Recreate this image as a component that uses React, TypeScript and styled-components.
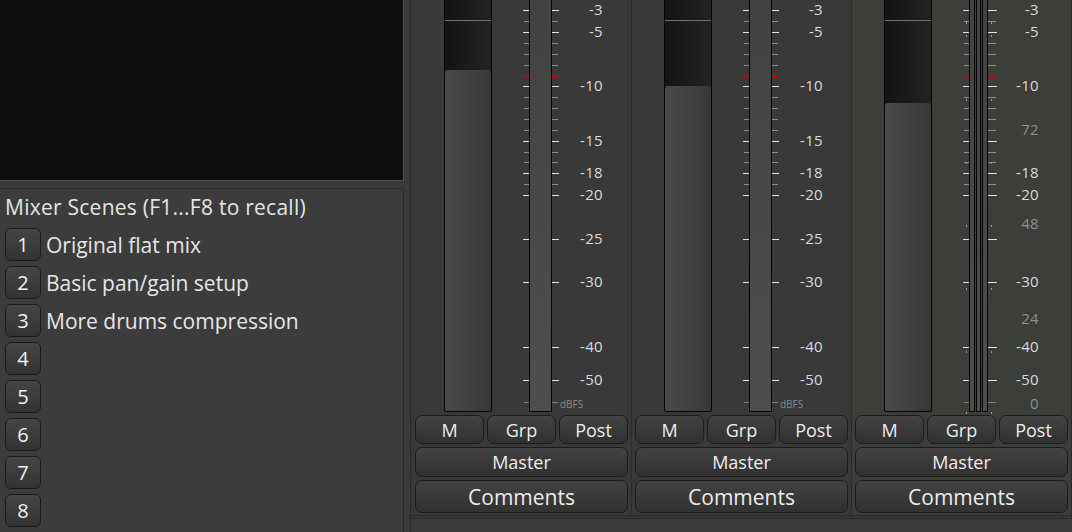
import React from "react";
import styled, { createGlobalStyle } from "styled-components";

const Global = createGlobalStyle`
  html, body { margin: 0; padding: 0; background: #3a3a3a; }
  body { font-family: "Open Sans", "DejaVu Sans", sans-serif; color: #e6e6e6; }
  * { box-sizing: border-box; }
`;

const Window = styled.div`
  display: flex;
  width: 1072px;
  height: 532px;
  overflow: hidden;
  background: #3a3a3a;
`;

/* ---------- left pane ---------- */
const LeftPane = styled.div`
  width: 404px;
  flex-shrink: 0;
  display: flex;
  flex-direction: column;
  gap: 7px;
`;

const Display = styled.div`
  height: 181px;
  flex-shrink: 0;
  background: #0e0e0e;
  border-right: 1px solid #4e4e4e;
  border-bottom: 1px solid #4e4e4e;
`;

const ScenesFrame = styled.div`
  flex: 1;
  background: #3c3c3c;
  border-top: 1px solid #2a2a2a;
  border-right: 1px solid #2a2a2a;
  padding-left: 5px;
`;

const ScenesTitle = styled.div`
  height: 36px;
  line-height: 36px;
  font-size: 21px;
  letter-spacing: 0.25px;
  white-space: nowrap;
  color: #e4e4e4;
`;

const SceneList = styled.div`
  margin-top: 3px;
  display: flex;
  flex-direction: column;
  gap: 5px;
`;

const SceneRow = styled.div`
  display: flex;
  align-items: center;
  gap: 5px;
  height: 33px;
`;

const SceneKey = styled.div`
  width: 36px;
  height: 33px;
  flex-shrink: 0;
  border: 1px solid #1b1b1b;
  border-radius: 6px;
  background: linear-gradient(#454545, #333333);
  display: flex;
  align-items: center;
  justify-content: center;
  font-size: 20px;
  color: #f0f0f0;
`;

const SceneName = styled.div`
  font-size: 21px;
  white-space: nowrap;
  color: #e6e6e6;
`;

/* ---------- divider ---------- */
const Divider = styled.div`
  width: 6px;
  flex-shrink: 0;
  background: #3a3a3a;
`;

/* ---------- mixer ---------- */
const MixerPane = styled.div`
  flex: 1;
  display: flex;
  flex-direction: column;
  border-left: 1px solid #2a2a2a;
  padding-left: 1px;
  background: #363636;
`;

const StripRow = styled.div`
  display: flex;
  height: 516px;
  flex-shrink: 0;
  border-bottom: 1px solid #2a2a2a;
`;

const BottomBar = styled.div`
  flex: 1;
  margin-top: 2px;
  border-top: 1px solid #2b2b2b;
  background: #3b3b3b;
`;

const Strip = styled.div<{ $tint?: boolean }>`
  width: 220px;
  flex-shrink: 0;
  display: flex;
  flex-direction: column;
  background: ${(p) => (p.$tint ? "#3b3e39" : "#393939")};
  border-right: 1px solid #2c2c2c;
`;

const MeterArea = styled.div`
  height: 412px;
  flex-shrink: 0;
  display: flex;
  padding-left: 32px;
`;

const FaderTrough = styled.div`
  position: relative;
  width: 48px;
  height: 412px;
  border: 1px solid #050505;
  border-top: none;
  border-radius: 0 0 3px 3px;
  background: linear-gradient(90deg, #131313, #232323);
  display: flex;
  flex-direction: column;
  justify-content: flex-end;
  margin-right: 31px;
`;

const UnityLine = styled.div`
  position: absolute;
  left: 0;
  right: 0;
  top: 20px;
  height: 1px;
  background: #707070;
`;

const FaderFill = styled.div`
  border-radius: 3px 3px 2px 2px;
  background: linear-gradient(90deg, #4a4a4a, #383838);
`;

const TickColumn = styled.div<{ $w: number }>`
  position: relative;
  width: ${(p) => p.$w}px;
  height: 412px;
`;

const Tick = styled.div<{ $kind: "major" | "minor" | "red" | "end"; $side: "l" | "r" }>`
  position: absolute;
  height: 1px;
  ${(p) => (p.$side === "l" ? "right: 0;" : "left: 0;")}
  width: ${(p) => (p.$kind === "major" ? "100%" : "calc(100% - 1px)")};
  background: ${(p) =>
    p.$kind === "major" ? "#e2e2e2" : p.$kind === "red" ? "#e00000" : p.$kind === "end" ? "#7a7a7a" : "#8c8c8c"};
`;

const Dot = styled.div<{ $side: "l" | "r" }>`
  position: absolute;
  width: 1px;
  height: 2px;
  background: #9a9a9a;
  ${(p) => (p.$side === "l" ? "right: 2px;" : "left: 3px;")}
`;

const Meter = styled.div<{ $w: number }>`
  width: ${(p) => p.$w}px;
  height: 412px;
  border: 1px solid #050505;
  border-top: none;
  background: linear-gradient(#424242, #4e4e4e);
`;

const MeterGroup = styled.div`
  display: flex;
  gap: 1px;
  width: 19px;
`;

const LabelColumn = styled.div<{ $w: number }>`
  position: relative;
  width: ${(p) => p.$w}px;
  height: 412px;
`;

const ScaleLabel = styled.div<{ $dim?: boolean }>`
  position: absolute;
  right: 0;
  height: 16px;
  line-height: 16px;
  font-size: 15px;
  letter-spacing: 0.3px;
  color: ${(p) => (p.$dim ? "#8f8f8f" : "#dadada")};
  white-space: nowrap;
`;

const UnitLabel = styled.div`
  position: absolute;
  left: 1px;
  height: 12px;
  line-height: 12px;
  font-size: 10px;
  color: #8a8a8a;
`;

const Controls = styled.div`
  display: flex;
  flex-direction: column;
  gap: 3px;
  padding: 3px 3px 0 3px;
`;

const ButtonRow = styled.div`
  display: flex;
  gap: 3px;
`;

const StripButton = styled.div<{ $h: number; $size: number }>`
  flex: 1 1 0;
  height: ${(p) => p.$h}px;
  border: 1px solid #1c1c1c;
  border-radius: 7px;
  background: linear-gradient(#424242, #313131);
  display: flex;
  align-items: center;
  justify-content: center;
  font-size: ${(p) => p.$size}px;
  color: #ececec;
  white-space: nowrap;
`;

const WideButton = styled(StripButton)`
  flex: 0 0 auto;
`;

/* ---------- data ---------- */
type TickDef = { y: number; kind: "major" | "minor" | "red" | "end"; label?: string };

const TICKS: TickDef[] = [
  { y: 10, kind: "major", label: "-3" },
  { y: 21, kind: "minor" },
  { y: 32, kind: "major", label: "-5" },
  { y: 43, kind: "minor" },
  { y: 54, kind: "minor" },
  { y: 65, kind: "minor" },
  { y: 76, kind: "red" },
  { y: 86, kind: "major", label: "-10" },
  { y: 97, kind: "minor" },
  { y: 108, kind: "minor" },
  { y: 119, kind: "minor" },
  { y: 130, kind: "minor" },
  { y: 141, kind: "major", label: "-15" },
  { y: 152, kind: "minor" },
  { y: 162, kind: "minor" },
  { y: 173, kind: "major", label: "-18" },
  { y: 184, kind: "minor" },
  { y: 195, kind: "major", label: "-20" },
  { y: 239, kind: "major", label: "-25" },
  { y: 282, kind: "major", label: "-30" },
  { y: 347, kind: "major", label: "-40" },
  { y: 380, kind: "major", label: "-50" },
  { y: 402, kind: "end" },
];

const STEREO_HIDDEN = new Set(["-15", "-25"]);
const STEREO_EXTRA = [
  { y: 130, label: "72" },
  { y: 224, label: "48" },
  { y: 319, label: "24" },
  { y: 404, label: "0" },
];
const STEREO_DOTS = [22, 35, 99, 162, 225, 288, 351, 412];

const SCENES = ["Original flat mix", "Basic pan/gain setup", "More drums compression", "", "", "", "", ""];

type StripDef = { level: number; stereo?: boolean };
const STRIPS: StripDef[] = [{ level: 70 }, { level: 86 }, { level: 103, stereo: true }];

const Ticks: React.FC<{ side: "l" | "r"; w: number; dots?: boolean }> = ({ side, w, dots }) => (
  <TickColumn $w={w}>
    {TICKS.map((t) => (
      <Tick key={t.y} $kind={t.kind} $side={side} style={{ top: t.y }} />
    ))}
    {dots && STEREO_DOTS.map((y) => <Dot key={y} $side={side} style={{ top: y }} />)}
  </TickColumn>
);

const MixerStrip: React.FC<StripDef> = ({ level, stereo }) => (
  <Strip $tint={stereo}>
    <MeterArea>
      <FaderTrough>
        <UnityLine />
        <FaderFill style={{ height: 411 - level }} />
      </FaderTrough>
      <Ticks side="l" w={6} dots={stereo} />
      {stereo ? (
        <MeterGroup>
          <Meter $w={6} />
          <Meter $w={6} />
          <Meter $w={6} />
        </MeterGroup>
      ) : (
        <Meter $w={23} />
      )}
      <Ticks side="r" w={stereo ? 9 : 7} dots={stereo} />
      <LabelColumn $w={stereo ? 42 : 44}>
        {TICKS.filter((t) => t.label && !(stereo && STEREO_HIDDEN.has(t.label))).map((t) => (
          <ScaleLabel key={t.y} style={{ top: t.y - 9 }}>
            {t.label}
          </ScaleLabel>
        ))}
        {stereo
          ? STEREO_EXTRA.map((e) => (
              <ScaleLabel key={e.y} $dim style={{ top: e.y - 9 }}>
                {e.label}
              </ScaleLabel>
            ))
          : <UnitLabel style={{ top: 398 }}>dBFS</UnitLabel>}
      </LabelColumn>
    </MeterArea>
    <Controls>
      <ButtonRow>
        <StripButton $h={29} $size={18}>M</StripButton>
        <StripButton $h={29} $size={18}>Grp</StripButton>
        <StripButton $h={29} $size={18}>Post</StripButton>
      </ButtonRow>
      <WideButton $h={30} $size={18}>Master</WideButton>
      <WideButton $h={33} $size={21}>Comments</WideButton>
    </Controls>
  </Strip>
);

export default function App() {
  return (
    <>
      <Global />
      <Window>
        <LeftPane>
          <Display />
          <ScenesFrame>
            <ScenesTitle>Mixer Scenes (F1...F8 to recall)</ScenesTitle>
            <SceneList>
              {SCENES.map((name, i) => (
                <SceneRow key={i}>
                  <SceneKey>{i + 1}</SceneKey>
                  {name && <SceneName>{name}</SceneName>}
                </SceneRow>
              ))}
            </SceneList>
          </ScenesFrame>
        </LeftPane>
        <Divider />
        <MixerPane>
          <StripRow>
            {STRIPS.map((s, i) => (
              <MixerStrip key={i} {...s} />
            ))}
          </StripRow>
          <BottomBar />
        </MixerPane>
      </Window>
    </>
  );
}
